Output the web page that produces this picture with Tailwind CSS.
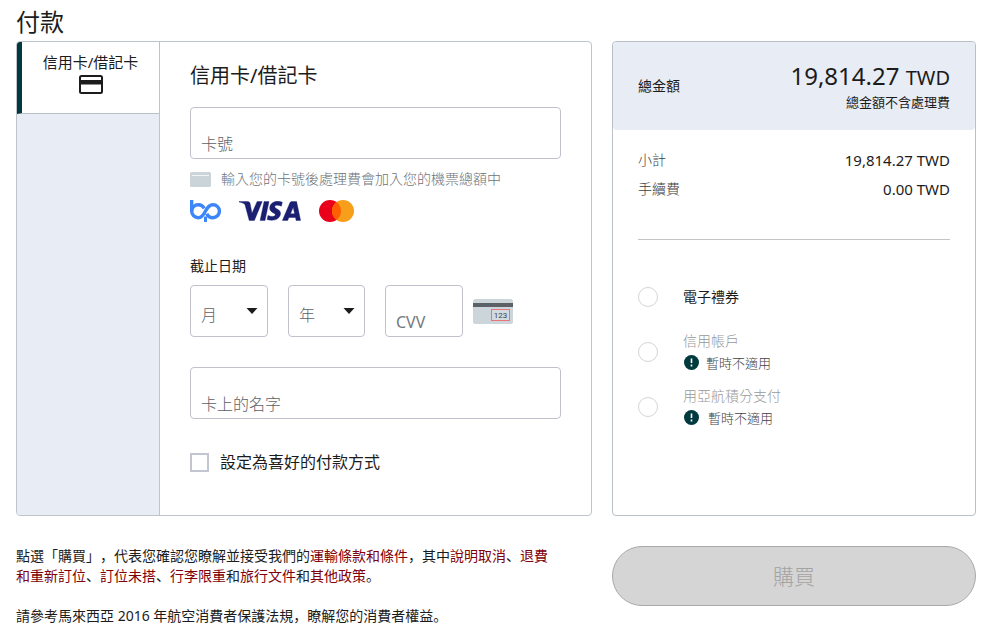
<!DOCTYPE html>
<html lang="zh-Hant">
<head>
<meta charset="utf-8">
<meta name="viewport" content="width=device-width, initial-scale=1">
<title>付款</title>
<script src="https://cdn.jsdelivr.net/npm/@tailwindcss/browser@4"></script>
</head>
<body class="bg-white pl-4 pr-[25px] pt-1 pb-4 font-['Noto_Sans','Noto_Sans_CJK_TC',sans-serif] font-light text-[14px] leading-5 text-[#1c1c1c]">
<h1 class="text-[24px] leading-9 font-normal">付款</h1>

<main class="mt-px grid grid-cols-[576fr_364fr] gap-x-5 gap-y-[30px]">
  <section class="flex overflow-hidden rounded border border-[#bfc4ca]">
    <nav class="w-[143px] shrink-0 border-r border-[#bfc2d0] bg-[#e8ecf5]">
      <button type="button" class="flex h-[72px] w-full flex-col items-center border-b border-l-[5px] border-b-[#b8c0cc] border-l-[#003a3f] bg-white pt-[10px] text-[15px] leading-5 font-normal">
        信用卡/借記卡
        <svg class="mt-[3px]" width="24" height="19" viewBox="0 0 24 19" fill="none" aria-hidden="true">
          <rect x="1" y="1" width="22" height="17" rx="1.5" stroke="#1c1c1c" stroke-width="2"/>
          <path d="M1 5h22v4.5H1z" fill="#1c1c1c"/>
        </svg>
      </button>
    </nav>
    <form class="min-w-0 grow px-[30px] pt-5 pb-[43px]">
      <h2 class="text-[20px] leading-7 font-normal">信用卡/借記卡</h2>
      <input type="text" aria-label="卡號" placeholder="卡號" class="mt-[17px] block h-[52px] w-full rounded border border-[#bfc2cc] px-[10px] pt-[22px] text-[16px] font-light placeholder:text-[#5c6166]">
      <p class="mt-[10px] flex items-center gap-[10px] whitespace-nowrap text-[#6f7377]">
        <svg class="shrink-0" width="21" height="15" viewBox="0 0 21 15" aria-hidden="true">
          <rect width="21" height="15" rx="1.5" fill="#cbd4d9"/>
          <path d="M2 3.5h17" stroke="#f2f5f6" stroke-width="1"/>
        </svg>
        輸入您的卡號後處理費會加入您的機票總額中
      </p>
      <div class="mt-[11px] flex h-[22px] items-center">
        <svg width="31" height="22" viewBox="0 0 31 22" fill="none" stroke="#3d86fa" stroke-width="3.4" role="img" aria-label="BigPay">
          <path d="M1.7 0V11.200a6.500 6.500 0 0 0 6.500 6.500c3.600 0 5.400-3 7.200-6.500s3.900-6.500 7.500-6.500a6.500 6.500 0 0 1 0 13c-3 0-5-1.500-6.100-4"/>
          <path d="M1.700 11.200a6.500 6.500 0 0 1 6.500-6.500c3 0 5 1.500 6 3.800"/>
          <path d="M15.500 16.500V22" stroke-width="3"/>
        </svg>
        <svg class="ml-[18px]" width="62" height="20" viewBox="0 0 62 20" fill="#1a1f71" stroke="#1a1f71" stroke-width="0.4" role="img" aria-label="VISA">
          <path d="M0 .6h8.600c1.400 0 2.200.7 2.500 2l1.900 9.600L18.100.6h5.100L15.400 19.400h-5.200L6.200 4.500C5.900 3.300 5.500 2.900 4.600 2.400 3.400 1.800 1.700 1.400 0 1z"/>
          <path d="M25.100.6H30l-4 18.800h-4.900z"/>
          <path d="M43.300 1.200 42.400 5.200C39.500 3.900 36 3.800 35.800 5.600c-.2 2.300 6 2.400 5.700 7-.3 5.600-6.800 8-13.400 6l.9-4.200c3.200 1.600 7.200 1.400 7.300-.6.100-2.200-5.900-2.300-5.600-7C31 1.600 37-1.200 43.300 1.200z"/>
          <path fill-rule="evenodd" d="M52.800.6h4.800l4 18.800h-4.500l-.6-2.900h-6.600l-1.200 2.900h-5.300l7.400-17.300c.4-1 1-1.500 2-1.500zM55.600 12.800 54.200 6.200 51.500 12.800z"/>
        </svg>
        <svg class="ml-[18px]" width="35" height="22" viewBox="0 0 35 22" role="img" aria-label="Mastercard">
          <circle cx="11" cy="11" r="11" fill="#eb001b"/>
          <circle cx="24" cy="11" r="11" fill="#f79e1b"/>
          <path d="M17.500 2.100a11 11 0 0 1 0 17.800 11 11 0 0 1 0-17.800z" fill="#ff5f00"/>
        </svg>
      </div>

      <fieldset class="mt-[34px]">
        <legend class="font-normal">截止日期</legend>
        <div class="mt-[9px] flex items-center">
          <div class="relative">
            <select aria-label="月" class="block h-[52px] w-[78px] appearance-none rounded border border-[#bfc2cc] bg-white px-[10px] pt-2 text-[16px] font-light text-[#5c6166]"><option>月</option></select>
            <svg class="pointer-events-none absolute top-[23px] right-[10px]" width="12" height="6" viewBox="0 0 12 6" fill="#1c1c1c" aria-hidden="true"><path d="M0.500 0h11L6 6z"/></svg>
          </div>
          <div class="relative ml-5">
            <select aria-label="年" class="block h-[52px] w-[77px] appearance-none rounded border border-[#bfc2cc] bg-white px-[10px] pt-2 text-[16px] font-light text-[#5c6166]"><option>年</option></select>
            <svg class="pointer-events-none absolute top-[23px] right-[10px]" width="12" height="6" viewBox="0 0 12 6" fill="#1c1c1c" aria-hidden="true"><path d="M0.500 0h11L6 6z"/></svg>
          </div>
          <input type="text" aria-label="CVV" placeholder="CVV" class="ml-5 block h-[52px] w-[78px] rounded border border-[#bfc2cc] px-[10px] pt-[22px] text-[16px] font-normal placeholder:text-[#74797e]">
          <svg class="ml-[10px]" width="40" height="25" viewBox="0 0 40 25" role="img" aria-label="CVV 123">
            <rect width="40" height="25" rx="2.500" fill="#cbd5da"/>
            <rect y="4" width="40" height="4" fill="#5b6166"/>
            <rect x="18.500" y="10.500" width="18" height="11" fill="#d3dbe0" stroke="#e8747c"/>
            <text x="27.500" y="19" text-anchor="middle" font-family="Roboto, sans-serif" font-size="8" font-weight="400" fill="#3c4347">123</text>
          </svg>
        </div>
      </fieldset>

      <input type="text" aria-label="卡上的名字" placeholder="卡上的名字" class="mt-[30px] block h-[52px] w-full rounded border border-[#bfc2cc] px-[10px] pt-[22px] text-[16px] font-light placeholder:text-[#5c6166]">
      <label class="mt-[33px] flex items-center gap-[11px] text-[16px] leading-5 font-normal">
        <input type="checkbox" class="size-[19px] appearance-none border-2 border-[#c3c5d0] bg-white checked:bg-[#003a3f]">
        設定為喜好的付款方式
      </label>
    </form>
  </section>

  <aside class="rounded border border-[#b9c0c6]">
    <div class="flex h-[88px] items-center justify-between rounded bg-[#e8ecf5] px-[25px] font-normal">
      <span>總金額</span>
      <div class="pt-px text-right">
        <p class="text-[24px] leading-7">19,814.27 <span class="text-[20px]">TWD</span></p>
        <p class="text-[13px] leading-5">總金額不含處理費</p>
      </div>
    </div>
    <dl class="mx-[25px] flex flex-col gap-[9px] border-b border-[#c4c4c8] pt-5 pb-10">
      <div class="flex justify-between"><dt class="text-[#3c4043]">小計</dt><dd class="text-[15px] font-normal">19,814.27 TWD</dd></div>
      <div class="flex justify-between"><dt class="text-[#3c4043]">手續費</dt><dd class="text-[15px] font-normal">0.00 TWD</dd></div>
    </dl>
    <div class="mx-[25px] mt-[29px]">
      <label class="flex h-[55px] items-center gap-[25px] font-normal">
        <input type="radio" name="method" class="size-5 appearance-none rounded-full border border-[#d5d5d5] checked:bg-[#003a3f]">
        電子禮券
      </label>
      <label class="flex h-[55px] items-center gap-[25px]">
        <input type="radio" name="method" disabled class="size-5 appearance-none rounded-full border border-[#d5d5d5]">
        <span class="flex flex-col gap-[2px]">
          <span class="text-[#999999]">信用帳戶</span>
          <span class="flex items-center gap-[7px] text-[13px] text-[#3f4346]">
            <svg class="ml-px" width="15" height="15" viewBox="0 0 15 15" aria-hidden="true"><circle cx="7.500" cy="7.500" r="7.500" fill="#003a3f"/><path d="M7.500 3.500v4.500M7.500 9.500v2" stroke="#fff" stroke-width="1.600"/></svg>
            暫時不適用
          </span>
        </span>
      </label>
      <label class="flex h-[55px] items-center gap-[25px]">
        <input type="radio" name="method" disabled class="size-5 appearance-none rounded-full border border-[#d5d5d5]">
        <span class="flex flex-col gap-[2px]">
          <span class="text-[#999999]">用亞航積分支付</span>
          <span class="flex items-center gap-[9px] text-[13px] text-[#3f4346]">
            <svg class="ml-px" width="15" height="15" viewBox="0 0 15 15" aria-hidden="true"><circle cx="7.500" cy="7.500" r="7.500" fill="#003a3f"/><path d="M7.500 3.500v4.500M7.500 9.500v2" stroke="#fff" stroke-width="1.600"/></svg>
            暫時不適用
          </span>
        </span>
      </label>
    </div>
  </aside>

  <div lang="zh-Hans" class="pr-10 font-['Noto_Sans','Noto_Sans_CJK_SC',sans-serif] font-normal [text-spacing-trim:space-all]">
    <p>點選「購買」，代表您確認您瞭解並接受我們的<a href="#" class="text-[#80000a]">運輸條款和條件</a>，其中<a href="#" class="text-[#80000a]">說明取消</a>、<a href="#" class="text-[#80000a]">退費和重新訂位</a>、<a href="#" class="text-[#80000a]">訂位未搭</a>、<a href="#" class="text-[#80000a]">行李限重</a>和<a href="#" class="text-[#80000a]">旅行文件</a>和<a href="#" class="text-[#80000a]">其他政策</a>。</p>
    <p class="mt-5">請參考馬來西亞 2016 年航空消費者保護法規，瞭解您的消費者權益。</p>
  </div>
  <button type="button" disabled class="h-[60px] rounded-full border border-[#a9a9a9] bg-[#d5d5d5] text-[21px] font-light text-[#a3a3a3]">購買</button>
</main>
</body>
</html>
